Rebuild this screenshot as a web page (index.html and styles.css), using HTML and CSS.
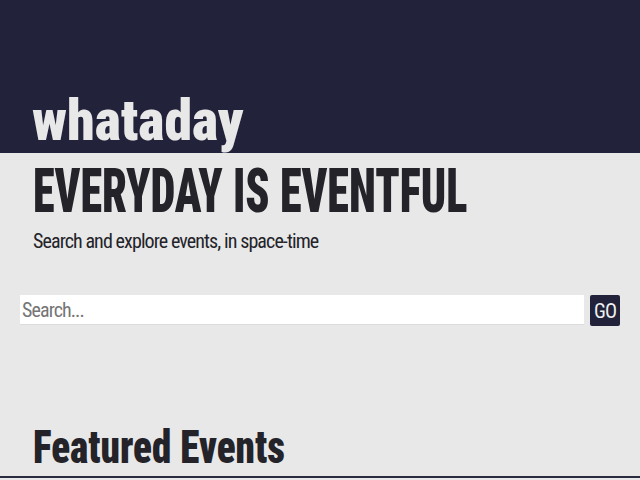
FILE: index.html
```html
<!DOCTYPE html>
<html lang="en">
<head>
<meta charset="utf-8">
<title>whataday</title>
<link rel="stylesheet" href="styles.css">
</head>
<body>
<header class="masthead">
  <h1 class="brand"><span class="squeeze brand-text">whataday</span></h1>
</header>
<main class="content">
  <section class="hero">
    <h2 class="tagline"><span class="squeeze tagline-text">EVERYDAY IS EVENTFUL</span></h2>
    <p class="subtitle">Search and explore events, in space-time</p>
  </section>
  <form class="search" onsubmit="return false">
    <input class="search-input" type="text" placeholder="Search...">
    <button class="search-button" type="submit">GO</button>
  </form>
  <section class="featured">
    <h2 class="featured-title"><span class="squeeze featured-text">Featured Events</span></h2>
  </section>
  <div class="rule"></div>
</main>
</body>
</html>
```
FILE: styles.css
```css
html, body {
  margin: 0;
  padding: 0;
  background: #e8e8e8;
}
body {
  font-family: "Roboto", "Open Sans", sans-serif;
  font-stretch: 75%;
  color: #232329;
  overflow: hidden;
}
.squeeze {
  display: inline-block;
  transform-origin: 0 50%;
  white-space: nowrap;
}
.masthead {
  background: #22233a;
  height: 153px;
  box-sizing: border-box;
  display: flex;
  align-items: flex-end;
  padding: 0 0 4px 32px;
}
.brand {
  margin: 0;
  font-size: 58px;
  line-height: 1;
  font-weight: 900;
  color: #e8e8e8;
}
.brand-text { transform: scaleX(0.965); }
.content {
  padding: 0 20px;
}
.hero {
  padding-left: 13px;
}
.tagline {
  margin: 7px 0 0;
  font-size: 62px;
  line-height: 1;
  font-weight: 900;
  color: #232329;
}
.tagline-text { transform: scaleX(0.713); }
.subtitle {
  margin: 9px 0 0;
  font-size: 20px;
  line-height: 1;
  font-weight: 400;
  letter-spacing: -0.9px;
  color: #232329;
}
.search {
  display: flex;
  gap: 6px;
  margin-top: 44px;
  align-items: flex-start;
}
.search-input {
  flex: 1;
  height: 30px;
  box-sizing: border-box;
  margin: 0;
  padding: 0 0 0 2px;
  border: none;
  border-bottom: 1px solid #dcdcdc;
  background: #ffffff;
  font-family: inherit;
  font-stretch: 75%;
  font-size: 20px;
  letter-spacing: -0.9px;
  color: #232329;
  outline: none;
}
.search-input::placeholder {
  color: #757575;
}
.search-button {
  width: 30px;
  height: 31px;
  margin: 0;
  padding: 0;
  border: none;
  border-radius: 2px;
  background: #22233a;
  color: #f0f0f0;
  font-family: inherit;
  font-stretch: 75%;
  font-size: 20px;
  letter-spacing: -1px;
  line-height: 1;
}
.featured {
  padding-left: 13px;
  margin-top: 98px;
}
.featured-title {
  margin: 0;
  font-size: 46px;
  line-height: 1;
  font-weight: 900;
  color: #232329;
}
.featured-text { transform: scaleX(0.85); }
.rule {
  margin: 6px -20px 0;
  border-top: 2px solid #2a2b40;
  height: 20px;
}
```
